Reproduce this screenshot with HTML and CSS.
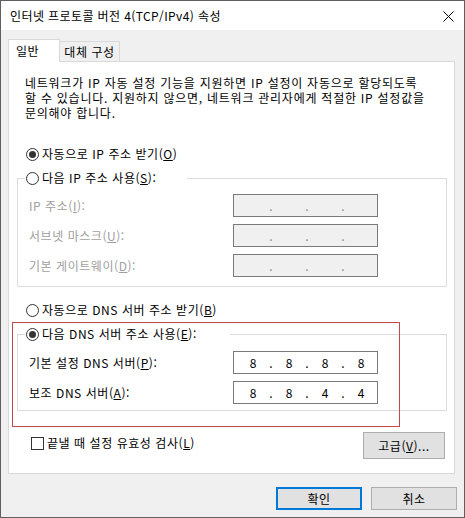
FILE: index.html
```html
<!DOCTYPE html>
<html lang="ko">
<head>
<meta charset="utf-8">
<link rel="stylesheet" href="styles.css">
</head>
<body>
<div class="window">
  <div class="titlebar">
    <span class="title">인터넷 프로토콜 버전 4(TCP/IPv4) 속성</span>
    <svg class="close" width="11" height="11" viewBox="0 0 11 11"><path d="M0.5 0.5L10.5 10.5M10.5 0.5L0.5 10.5" stroke="#000" stroke-width="1" fill="none"/></svg>
  </div>
  <div class="client">
    <div class="tabs">
      <div class="tab active">일반</div>
      <div class="tab">대체 구성</div>
    </div>
    <div class="panel">
      <p class="desc">네트워크가 IP 자동 설정 기능을 지원하면 IP 설정이 자동으로 할당되도록<br>할 수 있습니다. 지원하지 않으면, 네트워크 관리자에게 적절한 IP 설정값을<br>문의해야 합니다.</p>

      <div class="option first"><span class="radio checked"></span><span>자동으로 IP 주소 받기(<u>O</u>)</span></div>

      <div class="group group-ip">
        <div class="group-head head-ip"><span class="radio"></span><span>다음 IP 주소 사용(<u>S</u>):</span></div>
        <div class="field-row first-row">
          <span class="label disabled">IP 주소(<u>I</u>):</span>
          <div class="ipbox off"><span class="seg"></span><span class="dot">.</span><span class="seg"></span><span class="dot">.</span><span class="seg"></span><span class="dot">.</span><span class="seg"></span></div>
        </div>
        <div class="field-row">
          <span class="label disabled">서브넷 마스크(<u>U</u>):</span>
          <div class="ipbox off"><span class="seg"></span><span class="dot">.</span><span class="seg"></span><span class="dot">.</span><span class="seg"></span><span class="dot">.</span><span class="seg"></span></div>
        </div>
        <div class="field-row">
          <span class="label disabled">기본 게이트웨이(<u>D</u>):</span>
          <div class="ipbox off"><span class="seg"></span><span class="dot">.</span><span class="seg"></span><span class="dot">.</span><span class="seg"></span><span class="dot">.</span><span class="seg"></span></div>
        </div>
      </div>

      <div class="option second"><span class="radio"></span><span>자동으로 DNS 서버 주소 받기(<u>B</u>)</span></div>

      <div class="group group-dns">
        <div class="group-head head-dns"><span class="radio checked"></span><span>다음 DNS 서버 주소 사용(<u>E</u>):</span></div>
        <div class="field-row first-row-dns">
          <span class="label">기본 설정 DNS 서버(<u>P</u>):</span>
          <div class="ipbox"><span class="seg">8</span><span class="dot">.</span><span class="seg">8</span><span class="dot">.</span><span class="seg">8</span><span class="dot">.</span><span class="seg">8</span></div>
        </div>
        <div class="field-row">
          <span class="label">보조 DNS 서버(<u>A</u>):</span>
          <div class="ipbox"><span class="seg">8</span><span class="dot">.</span><span class="seg">8</span><span class="dot">.</span><span class="seg">4</span><span class="dot">.</span><span class="seg">4</span></div>
        </div>
      </div>

      <div class="bottom-row">
        <div class="check-row"><span class="checkbox"></span><span>끝낼 때 설정 유효성 검사(<u>L</u>)</span></div>
        <button class="btn advanced">고급(<u>V</u>)...</button>
      </div>
    </div>
    <div class="actions">
      <button class="btn primary">확인</button>
      <button class="btn">취소</button>
    </div>
  </div>
  <div class="highlight"></div>
</div>
</body>
</html>
```

FILE: styles.css
```css
* { box-sizing: border-box; }

html, body {
  margin: 0;
  padding: 0;
  background: #f0f0f0;
}

body {
  font-family: "Noto Sans CJK KR", "Noto Sans", sans-serif;
  font-size: 12px;
  color: #000;
  letter-spacing: 0.55px;
}

u { text-decoration: underline; text-underline-offset: 1px; }

.window {
  position: relative;
  width: 465px;
  height: 518px;
  border: 1px solid #5f5f5f;
  background: #f0f0f0;
  display: flex;
  flex-direction: column;
}

.titlebar {
  height: 29px;
  flex: none;
  background: #fff;
  display: flex;
  align-items: center;
  justify-content: space-between;
  padding: 0 10px 0 9px;
}

.title {
  font-size: 12px;
  line-height: 16px;
  margin-top: 1px;
  letter-spacing: 0.4px;
}

.close { display: block; margin-top: 1px; }

.client {
  flex: 1;
  padding: 9px 7px 0 7px;
  display: flex;
  flex-direction: column;
}

.tabs {
  display: flex;
  align-items: flex-end;
  height: 22px;
}

.tab {
  height: 20px;
  line-height: 18px;
  background: #f0f0f0;
  border: 1px solid #d9d9d9;
  border-bottom: none;
  border-left: none;
  width: 60px;
  text-align: center;
  padding-top: 1px;
}

.tab.active {
  position: relative;
  z-index: 1;
  height: 23px;
  width: 52px;
  margin-bottom: -1px;
  background: #fff;
  border-left: 1px solid #d9d9d9;
  text-align: left;
  padding-left: 7px;
  padding-top: 2px;
}

.panel {
  width: 447px;
  height: 413px;
  background: #fff;
  border: 1px solid #d9d9d9;
  display: flex;
  flex-direction: column;
}

.desc {
  margin: 0;
  padding: 13px 0 0 16px;
  line-height: 15px;
  white-space: nowrap;
  letter-spacing: 0.75px;
}

.option {
  display: flex;
  align-items: center;
  height: 16px;
  line-height: 16px;
  margin-left: 17px;
  gap: 3px;
}

.option.first { margin-top: 26px; }
.option.second { margin-top: 15px; }

.radio {
  position: relative;
  width: 13px;
  height: 13px;
  flex: none;
  border: 1px solid #333;
  border-radius: 50%;
  background: #fff;
}

.radio.checked::after {
  content: "";
  position: absolute;
  left: 2px;
  top: 2px;
  width: 7px;
  height: 7px;
  border-radius: 50%;
  background: #333;
}

.group {
  margin-left: 8px;
  width: 430px;
  border: 1px solid #dcdcdc;
  display: flex;
  flex-direction: column;
}

.group-ip { margin-top: 16px; padding-bottom: 9px; }
.group-dns { margin-top: 16px; padding-bottom: 6px; }

.group-head {
  display: flex;
  align-items: center;
  gap: 3px;
  height: 16px;
  line-height: 16px;
  margin-top: -9px;
  margin-left: 7px;
  padding-left: 1px;
  background: #fff;
}

.head-ip { width: 162px; }
.head-dns { width: 205px; }

.field-row {
  display: flex;
  align-items: center;
  padding-left: 11px;
  margin-top: 7px;
}

.field-row.first-row { margin-top: 8px; }
.field-row.first-row-dns { margin-top: 9px; }

.label {
  width: 204px;
  line-height: 16px;
}

.disabled { color: #a0a0a0; }

.ipbox {
  width: 145px;
  height: 23px;
  border: 1px solid #7a7a7a;
  background: #fff;
  display: flex;
  align-items: center;
  padding-left: 4px;
  line-height: 16px;
  letter-spacing: 0;
}

.ipbox.off { background: #f0f0f0; }
.ipbox.off .dot { color: #8a8a8a; }

.seg {
  width: 30px;
  text-align: center;
}

.dot {
  width: 6px;
  text-align: center;
}

.bottom-row {
  display: flex;
  justify-content: space-between;
  align-items: flex-start;
  margin-top: 21px;
  padding: 0 9px 0 22px;
}

.check-row {
  display: flex;
  align-items: center;
  gap: 3px;
  height: 16px;
  line-height: 16px;
  margin-top: 3px;
}

.checkbox {
  width: 13px;
  height: 13px;
  flex: none;
  border: 1px solid #333;
  background: #fff;
}

.btn {
  font-family: inherit;
  font-size: 12px;
  letter-spacing: 0.55px;
  color: #000;
  background: #e1e1e1;
  border: 1px solid #adadad;
  padding: 0;
  margin: 0;
  width: 86px;
  height: 23px;
  line-height: 16px;
}

.btn.advanced {
  width: 82px;
  height: 27px;
}

.btn.primary {
  border: 2px solid #0078d7;
}

.actions {
  display: flex;
  justify-content: flex-end;
  gap: 9px;
  margin-top: 13px;
}

.highlight {
  position: absolute;
  left: 11px;
  top: 321px;
  width: 388px;
  height: 105px;
  border: 1px solid #c4474a;
  pointer-events: none;
}
```
